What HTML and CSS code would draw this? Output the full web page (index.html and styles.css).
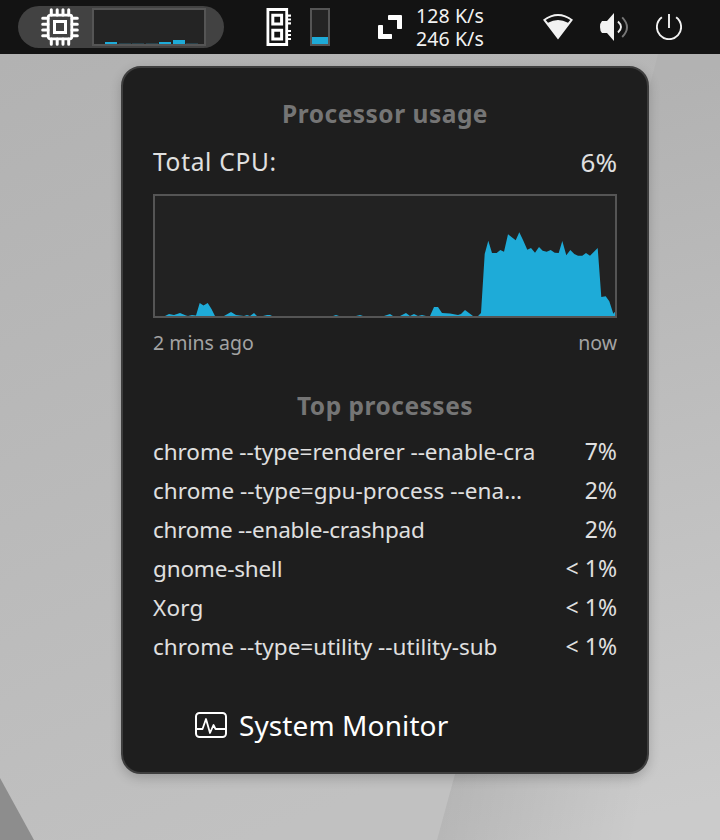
FILE: index.html
```html
<!DOCTYPE html>
<html lang="en">
<head>
<meta charset="utf-8">
<title>Processor usage</title>
<link rel="stylesheet" href="styles.css">
</head>
<body>
<svg class="wallpaper" viewBox="0 0 720 840" aria-hidden="true">
  <defs>
    <linearGradient id="base" x1="0" y1="0" x2="0.35" y2="1"><stop offset="0" stop-color="#b1b1b1"/><stop offset="1" stop-color="#c1c1c1"/></linearGradient>
    <linearGradient id="fold" gradientUnits="userSpaceOnUse" x1="560" y1="100" x2="720" y2="800"><stop offset="0" stop-color="#b2b2b2"/><stop offset="1" stop-color="#cbcbcb"/></linearGradient>
    <linearGradient id="shade" gradientUnits="userSpaceOnUse" x1="440" y1="780" x2="640" y2="820"><stop offset="0" stop-color="#000" stop-opacity=".1"/><stop offset="1" stop-color="#000" stop-opacity="0"/></linearGradient>
  </defs>
  <path fill="url(#base)" d="M0 0h720v840H0z"/>
  <path fill="url(#fold)" d="M658 54 652 77Q560 420 455 774L437 840H720V54z"/>
  <path fill="url(#shade)" d="M455 774 437 840H720V774z"/>
  <path fill="#8d8d8d" d="M0 778 34 840H0z"/>
</svg>
<header class="topbar">
  <div class="cpu-pill">
    <svg class="cpu-icon" viewBox="0 0 38 38"><g fill="none" stroke="#fff" stroke-linecap="round"><rect x="7.2" y="7.2" width="23.6" height="23.6" rx="2" stroke-width="2.8"/><path stroke-width="3" d="M10.300 1.700V7M16.200 1.700V7M22 1.700V7M27.700 1.700V7M10.300 31v5.300M16.200 31v5.300M22 31v5.300M27.700 31v5.300M1.700 10.300H7M1.700 16.200H7M1.700 22H7M1.700 27.700H7M31 10.300h5.300M31 16.200h5.300M31 22h5.300M31 27.700h5.300"/></g><rect x="13.500" y="13.500" width="11" height="11" fill="none" stroke="#fff" stroke-width="3"/></svg>
    <div class="cpu-history"><i class="b2"></i><i class="b1"></i><i class="b1"></i><i class="b1"></i><i class="b2"></i><i class="b4"></i><i class="b1"></i></div>
  </div>
  <svg class="mem-icon" viewBox="0 0 26 38"><path fill="none" stroke="#fff" stroke-width="2.800" d="M1.900 1.500H20.700V36.500H1.900z"/><path fill="none" stroke="#fff" stroke-width="3" d="M6.800 7.200h8.800v8.800H6.800zM6.800 22.200h8.800v8.800H6.800z"/><path stroke="#fff" stroke-width="2.200" d="M21 7.700h4M21 11.500h4M21 15.300h4M21 23h4M21 27h4M21 31h4"/></svg>
  <div class="mem-meter"><i></i></div>
  <svg class="net-icon" viewBox="0 0 24 24"><path fill="#fff" d="M10.700 0H23a1 1 0 0 1 1 1v12.300a.7.7 0 0 1-.7.7h-3.600a.7.7 0 0 1-.7-.7V5h-8.300a.7.7 0 0 1-.7-.7V.700zM.7 10h3.600a.7.7 0 0 1 .7.700V19h8.300a.7.700 0 0 1 .7.700v3.600a.7.700 0 0 1-.7.700H1a1 1 0 0 1-1-1V10.700z"/></svg>
  <div class="speeds"><span>128 K/s</span><span>246 K/s</span></div>
  <svg class="wifi" viewBox="0 0 30 26"><path fill="#f2f2f2" fill-rule="evenodd" d="M0 5.700Q15-5.500 30 5.700L15 25.600zM2.700 6 5 8.700Q15 3.200 25 8.700L27.300 6Q15-2 2.700 6z"/></svg>
  <svg class="volume" viewBox="0 0 30 28"><path fill="#f2f2f2" d="M2 8h5l7-8v28l-7-8H2Q0 18 0 14t2-6z"/><path fill="none" stroke="#eee" stroke-width="1.900" d="M18 8.500q6 5.500 0 11"/><path fill="none" stroke="#777" stroke-width="1.900" d="M22.200 4.300q9.600 10 0 19.700"/></svg>
  <svg class="power" viewBox="0 0 26 26"><path fill="none" stroke="#f2f2f2" stroke-width="1.900" d="M5.900 3.300a12.100 12.100 0 1 0 14.200 0M13 0v14"/></svg>
</header>
<main class="popup">
  <h2>Processor usage</h2>
  <div class="total"><span class="label">Total CPU:</span><span class="value">6%</span></div>
  <div class="chart"><svg viewBox="155 196 460 120" preserveAspectRatio="none"><path fill="#1eabd8" d="M155 316H165L169 314 174 315 180 313 186 315.500 188 316 192 315 196 315.500 199.700 303 203.500 305.500 207.700 303 211.500 309 215 316H224L231 312 236 315 244 316 247 315 250 316 254 313 257 316 263 316 267 315H270L272 316H333L336 315 339 316H356L360 315 363 316H384L390 314 393 316H400L406 313 410 316 414 314 418 316 422 315 426 316H430L434 307H438L442 313 450 313.500 458 315 461 314 465 310 469 313 473 316H478L481 313 484.700 254 488.300 240.700 492 253H496.700L500.300 250 504 251.700 508 234.300 515.700 240.300 519.300 232.300 523 240 527.300 249.700 531 248 535 252.700 539 247 542.700 250.700 546.700 251.700 550.700 250 554.700 252.700 558.700 253 562.300 241 566.300 255.300 570.300 250 574.300 254 578 255.700H582.300L586 253 590 255.700 597.700 248 601.300 297 605.700 296.300 609.300 301.300 613.300 313.700 615 311.700V316z"/></svg></div>
  <div class="axis"><span>2 mins ago</span><span>now</span></div>
  <h2 class="top">Top processes</h2>
  <ul class="procs">
    <li><span class="p1">chrome --type=renderer --enable-cra</span><b>7%</b></li>
    <li><span class="p2">chrome --type=gpu-process --ena…</span><b>2%</b></li>
    <li><span class="p3">chrome --enable-crashpad</span><b>2%</b></li>
    <li><span class="p4">gnome-shell</span><b>&lt; 1%</b></li>
    <li><span class="p5">Xorg</span><b>&lt; 1%</b></li>
    <li><span class="p6">chrome --type=utility --utility-sub</span><b>&lt; 1%</b></li>
  </ul>
  <div class="monitor">
    <svg viewBox="0 0 32 26"><g fill="none" stroke="#fff"><rect x="1" y="1" width="30" height="24" rx="3.500" stroke-width="2"/><path stroke-width="1.800" stroke-linejoin="round" d="M1 17H7.500L11 7l4 14 3.500-8 2 4H31"/></g></svg>
    <span>System Monitor</span>
  </div>
</main>
</body>
</html>
```
FILE: styles.css
```css
* { box-sizing: border-box; }
body { margin: 0; width: 720px; height: 840px; overflow: hidden; position: relative; font-family: "Noto Sans", sans-serif; color: #e0e0e0; }
svg { display: block; flex: none; }
.wallpaper { position: absolute; inset: 0; z-index: -1; width: 720px; height: 840px; }
.topbar { height: 54px; background: #131313; display: flex; align-items: center; padding-left: 18px; }
.cpu-pill { width: 206px; height: 42px; border-radius: 21px; background: #424242; display: flex; align-items: center; padding-left: 23px; }
.cpu-icon { width: 38px; height: 38px; }
.cpu-history { width: 114px; height: 38px; margin-left: 13px; border: 2px solid #555; background: #242424; display: flex; align-items: flex-end; gap: 1.5px; padding-left: 11px; }
.cpu-history i { width: 12px; background: #1eabd8; }
.cpu-history .b1 { height: 1px; background: #29414a; }
.cpu-history .b2 { height: 2px; }
.cpu-history .b4 { height: 4px; }
.mem-icon { width: 26px; height: 38px; margin-left: 42px; }
.mem-meter { width: 20px; height: 38px; margin-left: 18px; border: 2px solid #555; background: #242424; display: flex; align-items: flex-end; }
.mem-meter i { width: 100%; height: 7px; background: #1eabd8; }
.net-icon { width: 24px; height: 24px; margin-left: 48px; }
.speeds { width: 90px; margin-left: 14px; display: flex; flex-direction: column; font-size: 19.500px; line-height: 23px; color: #f2f2f2; letter-spacing: .1px; white-space: nowrap; }
.wifi { width: 30px; height: 26px; margin-left: 37px; }
.volume { width: 30px; height: 28px; margin-left: 27px; }
.power { width: 26px; height: 26px; margin-left: 26px; }
.popup { width: 528px; height: 708px; margin: 12px 0 0 121px; padding: 28px 30px 0; background: #1e1e1e; border: 2px solid #3e3e3e; border-radius: 20px; box-shadow: 0 4px 12px rgba(0,0,0,.2); }
h2 { margin: 0; height: 36px; font-size: 24.500px; line-height: 36px; text-align: center; color: #757575; letter-spacing: .5px; }
.total { margin-top: 12px; display: flex; justify-content: space-between; font-size: 24.500px; line-height: 36px; }
.total .label { letter-spacing: .7px; }
.total .value { font-size: 26px; }
.chart { margin-top: 14px; height: 124px; border: 2px solid #555; background: #222; }
.chart svg { width: 100%; height: 100%; }
.axis { margin-top: 10px; display: flex; justify-content: space-between; font-size: 19.500px; line-height: 30px; color: #a3a3a3; }
h2.top { margin-top: 30px; }
.procs { list-style: none; margin: 8px 0 0; padding: 0; }
.procs li { height: 39px; display: flex; justify-content: space-between; font-size: 22.500px; line-height: 39px; white-space: nowrap; }
.procs b { font-weight: 400; font-size: 23px; }
.procs .p1 { letter-spacing: -.06px; }
.procs .p2 { letter-spacing: .04px; }
.procs .p3 { letter-spacing: -.24px; }
.procs .p4 { letter-spacing: -.18px; }
.procs .p5 { letter-spacing: .2px; }
.monitor { display: flex; align-items: center; gap: 12px; margin: 39px 0 0 42px; font-size: 28px; line-height: 40px; color: #fff; letter-spacing: .1px; white-space: nowrap; }
.monitor svg { width: 32px; height: 26px; }
```
